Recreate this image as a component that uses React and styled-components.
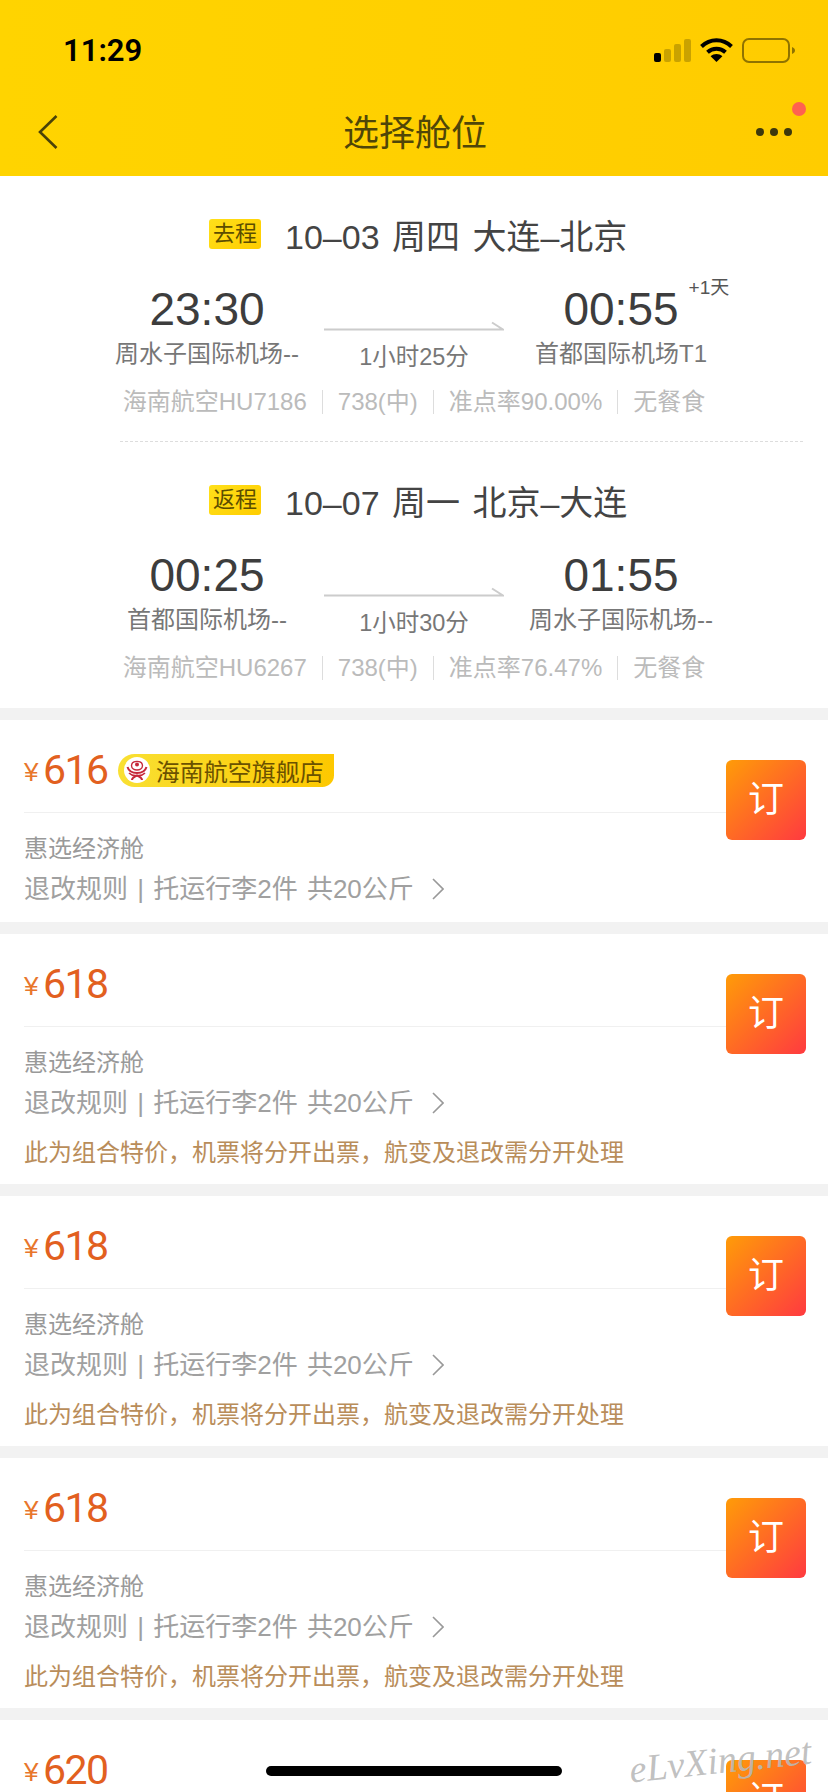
import React from 'react';
import styled, { createGlobalStyle } from 'styled-components';

const legs = [
	{
		tag: '去程',
		title: '10–03 周四 大连–北京',
		depart: '23:30',
		arrive: '00:55',
		nextDay: '+1天',
		from: '周水子国际机场--',
		to: '首都国际机场T1',
		duration: '1小时25分',
		info: ['海南航空HU7186', '738(中)', '准点率90.00%', '无餐食'],
	},
	{
		tag: '返程',
		title: '10–07 周一 北京–大连',
		depart: '00:25',
		arrive: '01:55',
		from: '首都国际机场--',
		to: '周水子国际机场--',
		duration: '1小时30分',
		info: ['海南航空HU6267', '738(中)', '准点率76.47%', '无餐食'],
	},
];

const NOTICE = '此为组合特价，机票将分开出票，航变及退改需分开处理';

const fares = [
	{ price: 616, shop: '海南航空旗舰店' },
	{ price: 618, notice: NOTICE },
	{ price: 618, notice: NOTICE },
	{ price: 618, notice: NOTICE },
	{ price: 620, notice: NOTICE },
];

function SignalIcon() {
	return (
		<svg width="37" height="23" viewBox="0 0 37 23">
			<rect x="0" y="14" width="7" height="9" rx="2" fill="#000" />
			<rect x="10" y="10" width="7" height="13" rx="2" fill="#c9a200" />
			<rect x="20" y="5" width="7" height="18" rx="2" fill="#c9a200" />
			<rect x="30" y="0" width="7" height="23" rx="2" fill="#c9a200" />
		</svg>
	);
}

function WifiIcon() {
	return (
		<svg width="33" height="24" viewBox="0 0 33 24" fill="none" stroke="#000" strokeWidth="4">
			<path d="M1.5 8.5C10 0.2 23 0.2 31.5 8.5" />
			<path d="M7.5 14.2C12.6 9.6 20.4 9.6 25.5 14.2" />
			<path d="M16.5 24L10.6 18.2C14 15.4 19 15.4 22.4 18.2Z" fill="#000" stroke="none" />
		</svg>
	);
}

function BatteryIcon() {
	return (
		<svg width="53" height="25" viewBox="0 0 53 25" fill="none">
			<rect x="1" y="1" width="46" height="23" rx="6" stroke="#8f7300" strokeWidth="2" />
			<path d="M50 9C52 10 53 11 53 12.5C53 14 52 15 50 16Z" fill="#8f7300" />
		</svg>
	);
}

function BackIcon() {
	return (
		<svg width="20" height="34" viewBox="0 0 20 34" fill="none">
			<path d="M18.5 1L2 17L18.5 33" stroke="#4a4208" strokeWidth="2.6" />
		</svg>
	);
}

function FlightArrow() {
	return (
		<ArrowSvg viewBox="0 0 180 10" fill="none">
			<path d="M0 8.5H179L168 1.5" stroke="#cccccc" strokeWidth="2" />
		</ArrowSvg>
	);
}

function AirlineLogo() {
	return (
		<svg width="26" height="26" viewBox="0 0 26 26" fill="none">
			<circle cx="13" cy="13" r="13" fill="#fff" />
			<circle cx="13" cy="7.5" r="2" fill="#c6283a" />
			<path d="M7.5 8.5C8 3 18 3 18.5 8.5C18.5 11.5 15.5 13 13 13C10.5 13 7.5 11.5 7.5 8.5Z" stroke="#c6283a" strokeWidth="1.4" />
			<path d="M3.5 10C5 15 9 16 13 16C17 16 21 15 22.5 10" stroke="#c6283a" strokeWidth="2" />
			<path d="M5 16C8 19 10 19 13 18.5C16 19 18 19 21 16" stroke="#c6283a" strokeWidth="1.6" />
			<path d="M8 23C8 20 11 20 13 18.5C15 20 18 20 18 23" stroke="#c6283a" strokeWidth="2" />
		</svg>
	);
}

function Chevron() {
	return (
		<ChevronSvg width="12" height="22" viewBox="0 0 12 22" fill="none">
			<path d="M1 1L11 11L1 21" stroke="#999" strokeWidth="1.6" />
		</ChevronSvg>
	);
}

function Leg({ leg }) {
	return (
		<LegBlock>
			<LegTitle>
				<LegTag>{leg.tag}</LegTag>
				<span>{leg.title}</span>
			</LegTitle>
			<Schedule>
				<Stop>
					<Time>{leg.depart}</Time>
					<Airport>{leg.from}</Airport>
				</Stop>
				<Middle>
					<FlightArrow />
					<Duration>{leg.duration}</Duration>
				</Middle>
				<Stop>
					<Time>
						{leg.arrive}
						{leg.nextDay && <NextDay>{leg.nextDay}</NextDay>}
					</Time>
					<Airport>{leg.to}</Airport>
				</Stop>
			</Schedule>
			<InfoRow>
				{leg.info.map((item, i) => (
					<React.Fragment key={item}>
						{i > 0 && <InfoSep />}
						<span>{item}</span>
					</React.Fragment>
				))}
			</InfoRow>
		</LegBlock>
	);
}

function FareCard({ fare }) {
	return (
		<Card $withNotice={Boolean(fare.notice)}>
			<CardMain>
				<PriceRow>
					<Yen>¥</Yen>
					<Price>{fare.price}</Price>
					{fare.shop && (
						<ShopBadge>
							<AirlineLogo />
							{fare.shop}
						</ShopBadge>
					)}
				</PriceRow>
				<CabinName>惠选经济舱</CabinName>
				<Rules>
					退改规则 | 托运行李2件 共20公斤
					<Chevron />
				</Rules>
				{fare.notice && <Notice>{fare.notice}</Notice>}
			</CardMain>
			<BookButton>订</BookButton>
		</Card>
	);
}

export default function App() {
	return (
		<Page>
			<GlobalStyle />
			{/* yellow top bar */}
			<Header>
				<StatusBar>
					<Clock>11:29</Clock>
					<StatusIcons>
						<SignalIcon />
						<WifiIcon />
						<BatteryIcon />
					</StatusIcons>
				</StatusBar>
				<NavBar>
					<BackIcon />
					<NavTitle>选择舱位</NavTitle>
					<MoreButton>
						<Dot />
						<Dot />
						<Dot />
						<RedDot />
					</MoreButton>
				</NavBar>
			</Header>
			{/* flight summary */}
			<Summary>
				{legs.map((leg, i) => (
					<React.Fragment key={leg.tag}>
						{i > 0 && <DashedLine />}
						<Leg leg={leg} />
					</React.Fragment>
				))}
			</Summary>
			{/* fare list */}
			{fares.map((fare, i) => (
				<FareCard key={i} fare={fare} />
			))}
			<Watermark>eLvXing.net</Watermark>
			<HomeBar />
		</Page>
	);
}

const GlobalStyle = createGlobalStyle`
	html, body {
		margin: 0;
		padding: 0;
		background: #f2f2f2;
	}
	* {
		box-sizing: border-box;
	}
`;

const Page = styled.div`
	position: relative;
	width: 828px;
	height: 1792px;
	overflow: hidden;
	background: #f2f2f2;
	font-family: 'Liberation Sans', 'Noto Sans CJK SC', sans-serif;
`;

const Header = styled.header`
	height: 176px;
	background: linear-gradient(90deg, #ffd400, #ffcc00);
`;

const StatusBar = styled.div`
	display: flex;
	align-items: center;
	justify-content: space-between;
	height: 88px;
	padding: 12px 33px 0 63px;
`;

const Clock = styled.span`
	color: #000;
	font-family: Roboto, sans-serif;
	font-size: 31px;
	font-weight: 600;
`;

const StatusIcons = styled.div`
	display: flex;
	align-items: center;
	gap: 9px;
`;

const NavBar = styled.div`
	display: grid;
	grid-template-columns: 1fr auto 1fr;
	align-items: center;
	height: 88px;
	padding: 0 36px 0 38px;
`;

const NavTitle = styled.h1`
	margin: 0;
	padding-bottom: 4px;
	color: #4f4608;
	font-size: 36px;
	font-weight: 400;
`;

const MoreButton = styled.div`
	position: relative;
	display: flex;
	gap: 6px;
	justify-self: end;
`;

const Dot = styled.span`
	width: 8px;
	height: 8px;
	border-radius: 50%;
	background: #3d380c;
`;

const RedDot = styled.span`
	position: absolute;
	top: -26px;
	right: -14px;
	width: 14px;
	height: 14px;
	border-radius: 50%;
	background: #ff6150;
`;

const Summary = styled.section`
	height: 532px;
	background: #fff;
`;

const LegBlock = styled.div`
	padding-top: 38px;
`;

const LegTitle = styled.div`
	display: flex;
	align-items: center;
	gap: 24px;
	height: 40px;
	padding-left: 209px;
	color: #444;
	font-size: 34px;
	word-spacing: 3px;
`;

const LegTag = styled.span`
	width: 52px;
	height: 30px;
	border-radius: 3px;
	background: linear-gradient(135deg, #ffe01a, #ffcd00);
	color: #5c4d00;
	font-size: 22px;
	line-height: 30px;
	text-align: center;
`;

const Schedule = styled.div`
	display: grid;
	grid-template-columns: 226px 180px 226px;
	gap: 4px;
	margin-top: 33px;
	padding-left: 94px;
	text-align: center;
`;

const Stop = styled.div``;

const Time = styled.div`
	position: relative;
	display: inline-block;
	color: #3d3d3d;
	font-size: 46px;
	line-height: 44px;
`;

const NextDay = styled.span`
	position: absolute;
	top: -11px;
	left: calc(100% + 10px);
	color: #555;
	font-size: 19px;
	line-height: 24px;
	white-space: nowrap;
`;

const Airport = styled.div`
	margin-top: 8px;
	color: #777;
	font-size: 24px;
	line-height: 30px;
	white-space: nowrap;
`;

const Middle = styled.div`
	padding-top: 34px;
`;

const ArrowSvg = styled.svg`
	display: block;
	width: 180px;
	height: 10px;
`;

const Duration = styled.div`
	margin-top: 11px;
	color: #777;
	font-size: 23.5px;
	line-height: 30px;
	white-space: nowrap;
`;

const InfoRow = styled.div`
	display: flex;
	align-items: center;
	justify-content: center;
	gap: 15px;
	margin-top: 15px;
	color: #bbb;
	font-size: 24px;
	line-height: 30px;
	white-space: nowrap;
`;

const InfoSep = styled.i`
	width: 1px;
	height: 24px;
	background: #ddd;
`;

const DashedLine = styled.div`
	margin: 24px 25px 0 120px;
	border-top: 1px dashed #ddd;
`;

const Card = styled.article`
	display: flex;
	align-items: flex-start;
	margin-top: 12px;
	padding: 0 22px ${(p) => (p.$withNotice ? '16px' : '18px')} 24px;
	background: #fff;
`;

const CardMain = styled.div`
	flex: 1;
`;

const PriceRow = styled.div`
	display: flex;
	align-items: center;
	height: 93px;
	padding-top: 8px;
	border-bottom: 1px solid #f0f0f0;
`;

const Yen = styled.span`
	margin-top: 4px;
	width: 19px;
	color: #e8762c;
	font-size: 26px;
	line-height: 30px;
`;

const Price = styled.span`
	color: #e2601f;
	font-family: Roboto, sans-serif;
	font-size: 41px;
	letter-spacing: -1.5px;
	line-height: 44px;
`;

const ShopBadge = styled.span`
	display: flex;
	align-items: center;
	gap: 6px;
	width: 216px;
	height: 33px;
	margin-left: 10px;
	padding-left: 6px;
	border-radius: 17px 0 12px 17px;
	background: linear-gradient(90deg, #f9e033, #fdc800);
	color: #6b5200;
	font-size: 24px;
	white-space: nowrap;
`;

const CabinName = styled.div`
	margin-top: 21px;
	color: #999;
	font-size: 24px;
	line-height: 30px;
`;

const Rules = styled.div`
	display: flex;
	align-items: center;
	margin-top: 10px;
	color: #a0a0a0;
	font-size: 26px;
	line-height: 30px;
	word-spacing: 2px;
	white-space: pre;
`;

const ChevronSvg = styled.svg`
	margin-left: 18px;
`;

const Notice = styled.div`
	margin-top: 20px;
	color: #b98d5a;
	font-size: 24px;
	line-height: 30px;
	white-space: nowrap;
`;

const BookButton = styled.div`
	flex: none;
	width: 80px;
	height: 80px;
	margin-top: 40px;
	border-radius: 6px;
	background: linear-gradient(135deg, #ff9c08, #ff3a40);
	color: #fff;
	font-size: 36px;
	line-height: 80px;
	text-align: center;
`;

const Watermark = styled.div`
	position: absolute;
	right: 16px;
	bottom: 10px;
	color: rgba(185, 185, 185, 0.9);
	font-family: 'Liberation Serif', serif;
	font-size: 38px;
	font-style: italic;
	transform: rotate(-6deg);
	pointer-events: none;
`;

const HomeBar = styled.div`
	position: absolute;
	left: 266px;
	bottom: 16px;
	width: 296px;
	height: 10px;
	border-radius: 5px;
	background: #000;
`;
